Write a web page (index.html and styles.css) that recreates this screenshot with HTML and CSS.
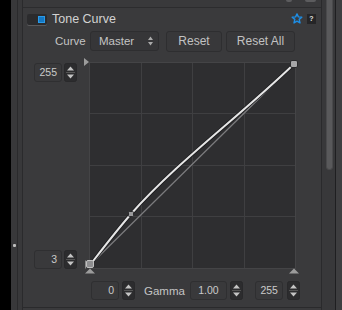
FILE: index.html
```html
<!DOCTYPE html>
<html>
<head>
<meta charset="utf-8">
<link rel="stylesheet" href="styles.css">
</head>
<body>
<div class="app">
  <div class="gutter"></div>
  <div class="rail"><span class="dot"></span></div>
  <div class="rail2"></div>
  <div class="panel">
    <div class="prev"><span class="bit bit-a"></span><span class="bit bit-b"></span></div>
    <div class="head">
      <span class="toggle"><span class="knob"></span></span>
      <span class="title">Tone Curve</span>
      <svg class="star" width="12" height="11" viewBox="0 0 12 11"><path d="M6 0.9 L7.35 3.9 L10.8 4.2 L8.2 6.4 L9 9.9 L6 8.1 L3 9.9 L3.8 6.4 L1.2 4.2 L4.65 3.9 Z" fill="none" stroke="#1d8ee6" stroke-width="1.4" stroke-linejoin="round"/></svg>
      <span class="help">?</span>
    </div>
    <div class="controls">
      <span class="label">Curve</span>
      <span class="select">Master<svg class="updown" width="5" height="10" viewBox="0 0 5 10"><path d="M0 4 L2.5 0.5 L5 4 Z M0 6 L2.5 9.5 L5 6 Z" fill="#aaa"/></svg></span>
      <span class="btn reset">Reset</span>
      <span class="btn reset-all">Reset All</span>
    </div>
    <div class="editor">
      <div class="side">
        <div class="spin"><span class="num">255</span><svg class="arrows" width="13" height="19" viewBox="0 0 13 19"><rect x="0.5" y="0.5" width="12" height="18" rx="2" fill="#2c2c2e" stroke="#29292b"/><path d="M3 7.5 L6.5 3.5 L10 7.5 Z M3 11.5 L6.5 15.5 L10 11.5 Z" fill="#c4c4c4"/><path d="M2 9.5 H11" stroke="#555" stroke-width="1"/></svg></div>
        <div class="spin"><span class="num">3</span><svg class="arrows" width="13" height="19" viewBox="0 0 13 19"><rect x="0.5" y="0.5" width="12" height="18" rx="2" fill="#2c2c2e" stroke="#29292b"/><path d="M3 7.5 L6.5 3.5 L10 7.5 Z M3 11.5 L6.5 15.5 L10 11.5 Z" fill="#c4c4c4"/><path d="M2 9.5 H11" stroke="#555" stroke-width="1"/></svg></div>
      </div>
      <svg class="graph" width="217" height="218" viewBox="83 56 217 218">
        <rect x="89.5" y="62.5" width="206" height="206" fill="#2e2e30" stroke="#444446"/>
        <path d="M141.5 63 V268 M192.5 63 V268 M244.5 63 V268 M90 113.5 H295 M90 165.5 H295 M90 216.5 H295" stroke="#3f3f41" stroke-width="1"/>
        <path d="M84 58 L89 62 L84 66 Z" fill="#9c9c9c"/>
        <path d="M85 273.5 L90 268.5 L95 273.5 Z" fill="#9c9c9c"/>
        <path d="M289 273.5 L294 268.5 L299 273.5 Z" fill="#9c9c9c"/>
        <path d="M90 265 L294 64" stroke="#7c7c7e" stroke-width="1.2" fill="none"/>
        <path d="M90 265 C104 247, 117 230, 131 214 C177 162, 238 118, 294 64" stroke="#1c1c1e" stroke-width="3.6" fill="none" stroke-linecap="round"/>
        <path d="M90 265 C104 247, 117 230, 131 214 C177 162, 238 118, 294 64" stroke="#e6e6e6" stroke-width="2" fill="none" stroke-linecap="round"/>
        <rect x="128.5" y="211.5" width="5" height="5" rx="1" fill="#9a9a9c" stroke="#2a2a2c"/>
        <rect x="290.5" y="60.5" width="7" height="7" rx="1.5" fill="#a6a6a8" stroke="#2a2a2c"/>
        <path d="M85.5 260.5 V268.5" stroke="#8a8a8a" stroke-width="1"/>
        <rect x="86.5" y="260.5" width="7" height="7" rx="1.5" fill="#8e8e90" stroke="#c0c0c0"/>
      </svg>
    </div>
    <div class="bottom">
      <span class="num n0">0</span>
      <svg class="arrows a0" width="13" height="19" viewBox="0 0 13 19"><rect x="0.5" y="0.5" width="12" height="18" rx="2" fill="#2c2c2e" stroke="#29292b"/><path d="M3 7.5 L6.5 3.5 L10 7.5 Z M3 11.5 L6.5 15.5 L10 11.5 Z" fill="#c4c4c4"/><path d="M2 9.5 H11" stroke="#555" stroke-width="1"/></svg>
      <span class="gamma">Gamma</span>
      <span class="num n1">1.00</span>
      <svg class="arrows a1" width="13" height="19" viewBox="0 0 13 19"><rect x="0.5" y="0.5" width="12" height="18" rx="2" fill="#2c2c2e" stroke="#29292b"/><path d="M3 7.5 L6.5 3.5 L10 7.5 Z M3 11.5 L6.5 15.5 L10 11.5 Z" fill="#c4c4c4"/><path d="M2 9.5 H11" stroke="#555" stroke-width="1"/></svg>
      <span class="num n2">255</span>
      <svg class="arrows a2" width="13" height="19" viewBox="0 0 13 19"><rect x="0.5" y="0.5" width="12" height="18" rx="2" fill="#2c2c2e" stroke="#29292b"/><path d="M3 7.5 L6.5 3.5 L10 7.5 Z M3 11.5 L6.5 15.5 L10 11.5 Z" fill="#c4c4c4"/><path d="M2 9.5 H11" stroke="#555" stroke-width="1"/></svg>
    </div>
    <div class="footer"></div>
  </div>
  <div class="scroll"><span class="thumb"></span></div>
  <div class="edge"></div>
</div>
</body>
</html>
```
FILE: styles.css
```css
html, body {
  margin: 0;
  padding: 0;
}
body {
  background: #000;
  width: 342px;
  height: 310px;
  overflow: hidden;
  font-family: "Liberation Sans", Arial, sans-serif;
  color: #c6c6c6;
}
.app {
  display: flex;
  height: 310px;
}
.gutter {
  width: 11px;
  background: #000;
}
.rail {
  width: 6px;
  background: #38383a;
  border-right: 1px solid #2a2a2c;
  display: flex;
  flex-direction: column;
  align-items: center;
  padding-top: 244px;
  box-sizing: content-box;
}
.dot {
  width: 3px;
  height: 3px;
  background: #bdbdbd;
  border-radius: 1px;
}
.rail2 {
  width: 4px;
  background: #38383a;
  border-right: 1px solid #2a2a2c;
}
.panel {
  width: 298px;
  background: #3a3a3c;
  border-right: 1px solid #2a2a2c;
  display: flex;
  flex-direction: column;
}
.prev {
  height: 7px;
  background: #39393b;
  border-bottom: 1px solid #2c2c2e;
  display: flex;
  justify-content: flex-end;
  align-items: flex-start;
}
.bit {
  height: 2px;
  background: #5c5c5e;
  border-radius: 0 0 2px 2px;
}
.bit-a {
  width: 6px;
  margin-right: 13px;
}
.bit-b {
  width: 11px;
  margin-right: 5px;
}
.head {
  height: 22px;
  display: flex;
  align-items: center;
  padding-left: 4px;
}
.toggle {
  width: 20px;
  height: 11px;
  background: #2b2b2d;
  border-radius: 2px;
  box-shadow: 0 1px 0 #59595b;
  display: flex;
  justify-content: flex-end;
  align-items: center;
  padding-right: 2px;
  box-sizing: border-box;
}
.knob {
  width: 7px;
  height: 7px;
  background: #1478c4;
  border: 1px solid #2a9ae8;
  box-sizing: border-box;
}
.title {
  margin-left: 5px;
  font-size: 12.5px;
  color: #d2d2d2;
}
.star {
  margin-left: auto;
  margin-top: -1px;
}
.help {
  width: 9px;
  height: 10px;
  margin-left: 4px;
  margin-right: 5px;
  margin-top: -1px;
  background: #252527;
  color: #e0e0e0;
  font-size: 7px;
  font-weight: bold;
  line-height: 10px;
  text-align: center;
}
.controls {
  height: 22px;
  display: flex;
  align-items: center;
  padding-left: 32px;
}
.label {
  width: 35px;
  font-size: 11.5px;
  color: #c4c4c4;
}
.select {
  width: 69px;
  height: 20px;
  box-sizing: border-box;
  border: 1px solid #2e2e30;
  border-radius: 3px;
  background: #363638;
  font-size: 11.5px;
  color: #c4c4c4;
  display: flex;
  align-items: center;
  padding-left: 8px;
  padding-right: 5px;
}
.updown {
  margin-left: auto;
}
.btn {
  height: 21px;
  box-sizing: border-box;
  border: 1px solid #2e2e30;
  border-radius: 3px;
  background: #38383a;
  font-size: 12px;
  color: #c2c2c2;
  display: flex;
  align-items: center;
  justify-content: center;
}
.reset {
  width: 56px;
  margin-left: 7px;
}
.reset-all {
  width: 69px;
  margin-left: 4px;
}
.editor {
  margin-top: 4px;
  height: 218px;
  display: flex;
  padding-left: 11px;
}
.side {
  width: 43px;
  margin-right: 6px;
  display: flex;
  flex-direction: column;
  justify-content: space-between;
  padding-top: 7px;
  padding-bottom: 5px;
}
.spin {
  display: flex;
  gap: 2px;
}
.num {
  display: block;
  width: 28px;
  height: 19px;
  box-sizing: border-box;
  border: 1px solid #2f2f31;
  border-radius: 3px;
  background: #39393b;
  font-size: 10.5px;
  line-height: 17px;
  text-align: right;
  padding-right: 4px;
  color: #cacaca;
}
.graph {
  display: block;
}
.bottom {
  margin-top: 7px;
  height: 19px;
  display: flex;
  align-items: center;
  padding-left: 68px;
}
.a0 {
  margin-left: 3px;
}
.gamma {
  margin-left: 9px;
  font-size: 11.5px;
  color: #c4c4c4;
}
.n1 {
  width: 37px;
  margin-left: 5px;
  text-align: center;
  padding-right: 0;
}
.a1 {
  margin-left: 3px;
}
.n2 {
  margin-left: 12px;
}
.a2 {
  margin-left: 4px;
}
.footer {
  margin-top: auto;
  height: 2px;
  border-top: 1px solid #2a2a2c;
}
.scroll {
  width: 13px;
  box-sizing: border-box;
  padding-left: 4px;
  padding-right: 2px;
  background: #38383a;
  border-right: 1px solid #1f1f21;
  box-sizing: content-box;
  width: 7px;
}
.thumb {
  display: block;
  height: 170px;
  box-sizing: border-box;
  background: #59595b;
  border: 1px solid #4a4a4c;
  border-top: none;
  border-radius: 0 0 4px 4px;
}
.edge {
  width: 6px;
  background: #3e3e40;
}
```
